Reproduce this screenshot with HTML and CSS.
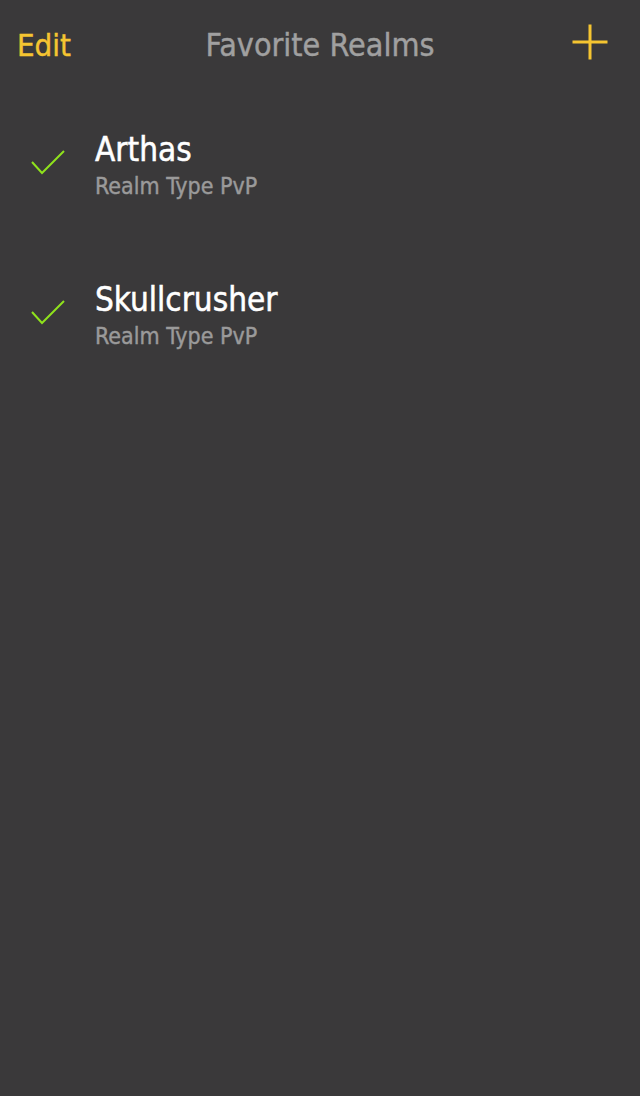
FILE: index.html
```html
<!DOCTYPE html>
<html>
<head>
<meta charset="utf-8">
<link rel="stylesheet" href="styles.css">
</head>
<body>
<div class="screen">
  <header class="nav">
    <span class="nav-edit">Edit</span>
    <span class="nav-title">Favorite Realms</span>
    <span class="nav-add">
      <svg width="36" height="36" viewBox="0 0 36 36"><path d="M18 0.5V35.5M0.5 18H35.5" stroke="#f5c531" stroke-width="3" fill="none"/></svg>
    </span>
  </header>
  <ul class="list">
    <li class="row">
      <svg class="check" width="36" height="26" viewBox="0 0 36 26"><path d="M1 12L11 23L33 1" stroke="#8fe21c" stroke-width="2" fill="none"/></svg>
      <div class="row-text">
        <div class="row-title">Arthas</div>
        <div class="row-sub">Realm Type PvP</div>
      </div>
    </li>
    <li class="row">
      <svg class="check" width="36" height="26" viewBox="0 0 36 26"><path d="M1 12L11 23L33 1" stroke="#8fe21c" stroke-width="2" fill="none"/></svg>
      <div class="row-text">
        <div class="row-title">Skullcrusher</div>
        <div class="row-sub">Realm Type PvP</div>
      </div>
    </li>
  </ul>
</div>
</body>
</html>
```

FILE: styles.css
```css
html, body {
  margin: 0;
  padding: 0;
  background: #3a393a;
}
.screen {
  width: 640px;
  height: 1096px;
  background: #3a393a;
  font-family: "DejaVu Sans Condensed", "DejaVu Sans", sans-serif;
}
.nav {
  display: flex;
  align-items: center;
  justify-content: space-between;
  height: 88px;
  padding: 2px 32px 0 17px;
  box-sizing: border-box;
  position: relative;
}
.nav-edit {
  color: #f5c531;
  font-size: 31px;
  -webkit-text-stroke: 0.4px #f5c531;
}
.nav-title {
  color: #a0a0a0;
  font-size: 32px;
  -webkit-text-stroke: 0.4px #a0a0a0;
  position: absolute;
  left: 0;
  right: 0;
  text-align: center;
  pointer-events: none;
}
.nav-add {
  display: flex;
  margin-top: -6px;
}
.list {
  list-style: none;
  margin: 0;
  padding: 44px 0 0 0;
}
.row {
  display: flex;
  align-items: flex-start;
  height: 150px;
}
.check {
  margin: 18px 0 0 31px;
}
.row-text {
  margin-left: 28px;
}
.row-title {
  color: #ffffff;
  font-size: 33px;
  line-height: 36px;
  -webkit-text-stroke: 0.5px #ffffff;
}
.row-sub {
  color: #9a9a9a;
  font-size: 23px;
  line-height: 32px;
  margin-top: 2px;
  -webkit-text-stroke: 0.4px #9a9a9a;
}
```
